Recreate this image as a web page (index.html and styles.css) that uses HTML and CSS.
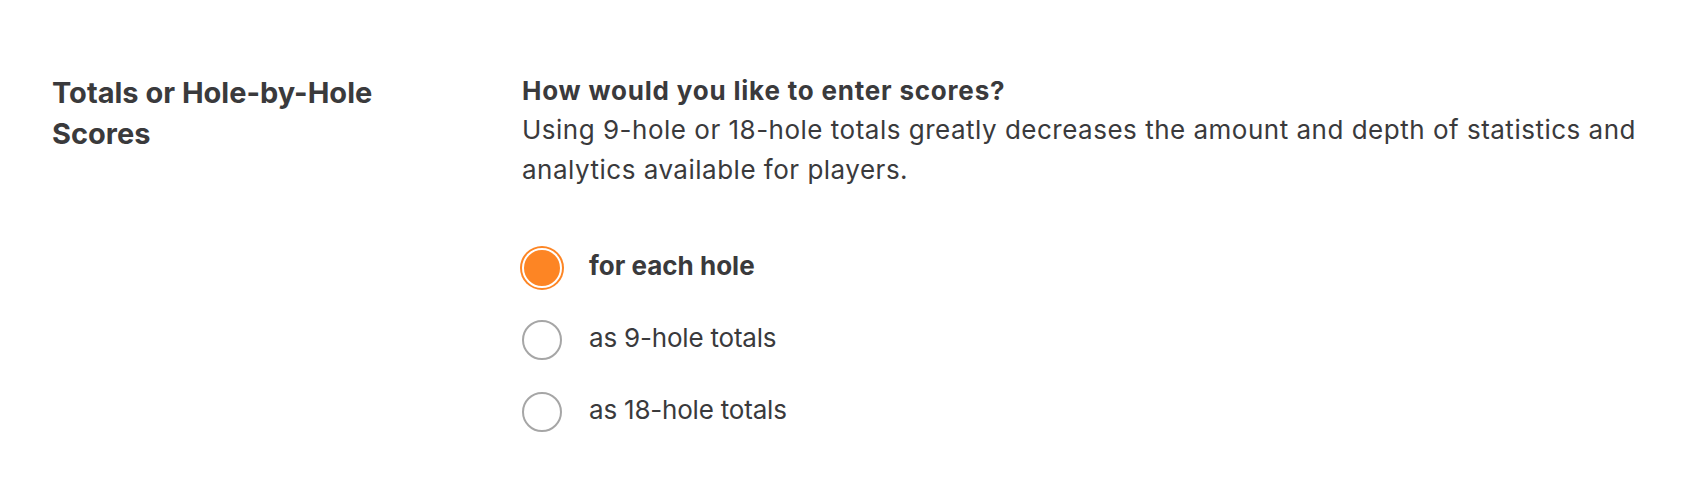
FILE: index.html
```html
<!DOCTYPE html>
<html lang="en">
<head>
<meta charset="utf-8">
<title>Score entry setting</title>
<link rel="stylesheet" href="styles.css">
</head>
<body>
<section class="setting">
  <div class="setting-label">
    <h3 class="setting-title">Totals or Hole-by-Hole Scores</h3>
  </div>
  <div class="setting-body">
    <p class="question">How would you like to enter scores?</p>
    <p class="description">Using 9-hole or 18-hole totals greatly decreases the amount and depth of statistics and analytics available for players.</p>
    <div class="options" role="radiogroup">
      <label class="option is-checked">
        <span class="radio"></span>
        <span class="option-text">for each hole</span>
      </label>
      <label class="option">
        <span class="radio"></span>
        <span class="option-text">as 9-hole totals</span>
      </label>
      <label class="option">
        <span class="radio"></span>
        <span class="option-text">as 18-hole totals</span>
      </label>
    </div>
  </div>
</section>
</body>
</html>
```
FILE: styles.css
```css
html, body {
  margin: 0;
  padding: 0;
  background: #ffffff;
}

body {
  font-family: Inter, "Noto Sans", sans-serif;
  color: #3a3a3c;
}

.setting {
  display: grid;
  grid-template-columns: 470px 1fr;
  padding: 71px 25px 0 52px;
}

.setting-title {
  margin: 1px 0 0 0;
  max-width: 400px;
  font-size: 29px;
  line-height: 41px;
  font-weight: 700;
  letter-spacing: 0;
}

.setting-body {
  max-width: 1150px;
}

.question {
  margin: 0;
  font-size: 26px;
  line-height: 39px;
  font-weight: 700;
  letter-spacing: 0.8px;
}

.description {
  margin: 0;
  font-size: 26px;
  line-height: 40px;
  font-weight: 400;
  letter-spacing: 0.5px;
}

.options {
  display: flex;
  flex-direction: column;
  gap: 32px;
  margin-top: 58px;
}

.option {
  display: flex;
  align-items: flex-start;
  gap: 27px;
  cursor: pointer;
}

.radio {
  flex: none;
  box-sizing: border-box;
  width: 40px;
  height: 40px;
  border-radius: 50%;
  border: 2px solid #a6a6a6;
  background: #ffffff;
}

.is-checked .radio {
  background: #fd8524;
  border-color: #ffffff;
  box-shadow: 0 0 0 2px #fd8524;
}

.option-text {
  font-size: 26px;
  line-height: 36px;
  letter-spacing: -0.2px;
}

.is-checked .option-text {
  font-weight: 700;
  letter-spacing: 0;
}
```
